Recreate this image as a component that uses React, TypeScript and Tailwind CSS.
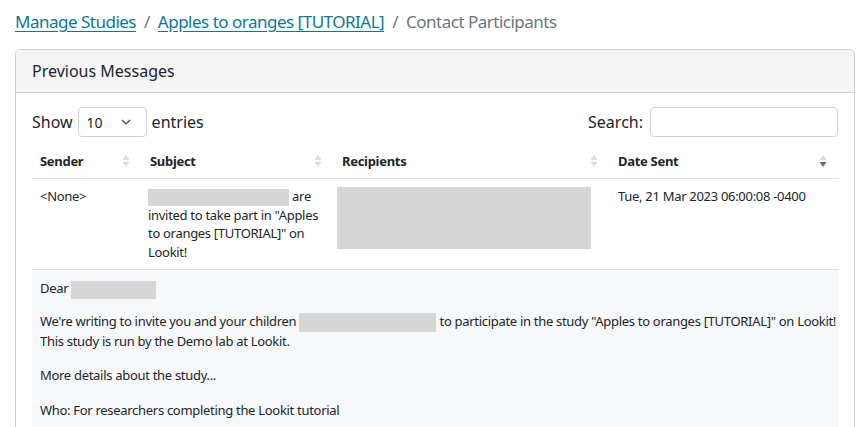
import React from "react";

const font = { fontFamily: '"Noto Sans", "Open Sans", sans-serif' };

function SortIcon({ active }: { active?: "asc" | "desc" }) {
  return (
    <svg width="8" height="14" viewBox="0 0 8 14" className="shrink-0">
      <path d="M4 1 L7.5 6 L0.5 6 Z" fill={active === "asc" ? "#666" : "#dcdcdc"} />
      <path d="M4 13 L7.5 8 L0.5 8 Z" fill={active === "desc" ? "#6b6b6b" : "#dcdcdc"} />
    </svg>
  );
}

function Redacted({ className }: { className: string }) {
  return <span className={`inline-block bg-[#d6d6d6] align-middle ${className}`} />;
}

const headers: { label: string; w: string; sort?: "asc" | "desc" }[] = [
  { label: "Sender", w: "w-[110px]" },
  { label: "Subject", w: "w-[192px]" },
  { label: "Recipients", w: "w-[276px]" },
  { label: "Date Sent", w: "w-[229px]", sort: "desc" },
];

export default function App() {
  return (
    <div className="min-h-[427px] overflow-hidden bg-white text-[#212529]" style={font}>
      {/* breadcrumb */}
      <nav className="flex items-center px-[15px] pt-[8px] text-[17px] leading-[27px] tracking-[-0.5px]">
        <a className="text-[#0b7894] underline underline-offset-[3px]" href="#">
          Manage Studies
        </a>
        <span className="px-[8px] text-[#6c757d]">/</span>
        <a className="text-[#0b7894] underline underline-offset-[3px]" href="#">
          Apples to oranges [TUTORIAL]
        </a>
        <span className="px-[8px] text-[#6c757d]">/</span>
        <span className="text-[#6c757d]">Contact Participants</span>
      </nav>

      {/* card */}
      <div className="ml-[15px] mr-[11px] mt-[14px] rounded-[5px] border border-[#d2d2d2]">
        <div className="rounded-t-[5px] border-b border-[#d2d2d2] bg-[#f5f5f5] px-[16px] py-[9px] text-[16px] leading-[24px]">
          Previous Messages
        </div>
        <div className="px-[16px] pt-[14px]">
          <div className="flex items-center justify-between text-[16px]">
            <div className="flex items-center">
              <span>Show</span>
              <div className="mx-[5px] flex h-[30px] w-[69px] items-center justify-between rounded-[4px] border border-[#ced4da] pl-[8px] pr-[15px] text-[14px]">
                <span>10</span>
                <svg width="10" height="6" viewBox="0 0 10 6">
                  <path d="M1 1 L5 5 L9 1" fill="none" stroke="#444" strokeWidth="1.2" />
                </svg>
              </div>
              <span>entries</span>
            </div>
            <div className="flex items-center">
              <span className="mr-[7px]">Search:</span>
              <div className="h-[30px] w-[188px] rounded-[4px] border border-[#ced4da]" />
            </div>
          </div>

          <table className="mt-[7px] w-full table-fixed border-collapse text-[13px] leading-[18.5px] tracking-[-0.3px]">
            <thead>
              <tr className="border-b border-[#dee2e6]">
                {headers.map((h) => (
                  <th key={h.label} className={`${h.w} h-[34px] pl-[8px] pr-[12px] text-left font-bold`}>
                    <div className="flex items-center justify-between">
                      <span>{h.label}</span>
                      <SortIcon active={h.sort} />
                    </div>
                  </th>
                ))}
              </tr>
            </thead>
            <tbody>
              <tr className="border-b border-[#dee2e6] align-top">
                <td className="px-[8px] py-[8px]">&lt;None&gt;</td>
                <td className="py-[8px] pl-[6px] pr-[8px]">
                  <Redacted className="h-[17px] w-[141px]" /> are invited to take part in "Apples to
                  oranges [TUTORIAL]" on Lookit!
                </td>
                <td className="px-[3px] py-[8px]">
                  <Redacted className="h-[62px] w-[254px]" />
                </td>
                <td className="px-[8px] py-[8px]">Tue, 21 Mar 2023 06:00:08 -0400</td>
              </tr>
              <tr className="bg-[#f7f8fa]">
                <td colSpan={4} className="px-[8px] pt-[9px] pb-[20px] leading-[19px]">
                  <p className="mb-[13px]">
                    Dear <Redacted className="h-[18px] w-[85px]" />
                  </p>
                  <p className="mb-[15px]">
                    <span className="whitespace-nowrap">
                      We're writing to invite you and your children{" "}
                      <Redacted className="h-[19px] w-[137px]" /> to participate in the study "Apples to
                      oranges [TUTORIAL]" on Lookit!
                    </span>
                    <br />
                    This study is run by the Demo lab at Lookit.
                  </p>
                  <p className="mb-[16px]">More details about the study...</p>
                  <p>Who: For researchers completing the Lookit tutorial</p>
                </td>
              </tr>
            </tbody>
          </table>
        </div>
      </div>
    </div>
  );
}
